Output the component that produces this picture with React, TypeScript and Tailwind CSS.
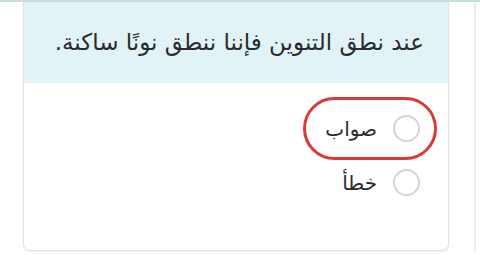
export default function App() {
    return (
        <div className="relative h-[255px] w-[480px] overflow-hidden bg-white font-['DejaVu_Sans',sans-serif]">
            <div className="h-[2px] w-full bg-[#c9dcdf]" />

            <div className="flex">
                <div className="w-[23px] shrink-0" />

                {/* Question card */}
                <div
                    dir="rtl"
                    className="flex h-[249px] w-[426px] shrink-0 flex-col overflow-hidden rounded-b-[7px] border border-t-0 border-[#e3e3e3] shadow-[0_1px_2px_rgba(0,0,0,0.06)]"
                >
                    <div className="flex h-[81px] items-center bg-[#e2f3f7] pr-[24px] text-[23px] tracking-[-0.2px] text-[#2b2b2b]">
                        عند نطق التنوين فإننا ننطق نونًا ساكنة.
                    </div>

                    <div className="flex flex-col items-start pr-[11px] pt-[14px]">
                        <div className="flex h-[63px] w-[134px] items-center gap-[16px] rounded-full border-[3px] border-[#d63b36] pr-[14px]">
                            <span className="h-[27px] w-[27px] shrink-0 rounded-full border-2 border-[#d4d4d4]" />
                            <span className="text-[20px] text-[#2b2b2b]">صواب</span>
                        </div>

                        <div className="-mt-[9px] flex h-[63px] items-center gap-[16px] pr-[17px]">
                            <span className="h-[27px] w-[27px] shrink-0 rounded-full border-2 border-[#d4d4d4]" />
                            <span className="text-[20px] text-[#2b2b2b]">خطأ</span>
                        </div>
                    </div>
                </div>

                <div className="flex-1" />
                <div className="mr-[4px] w-[2px] shrink-0 bg-[#ececec]" />
            </div>
        </div>
    );
}
